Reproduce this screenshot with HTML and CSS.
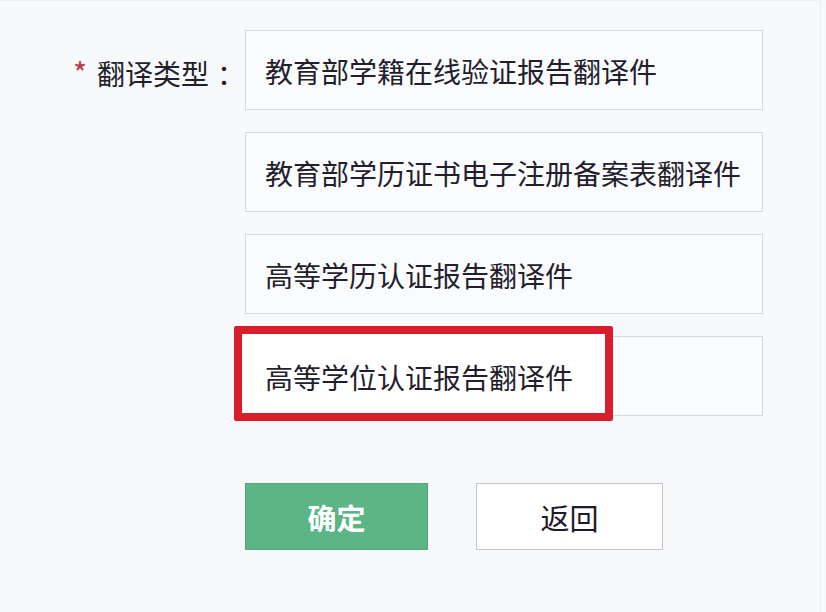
FILE: index.html
```html
<!DOCTYPE html>
<html lang="zh-CN">
<head>
<meta charset="utf-8">
<title>翻译类型</title>
<link rel="stylesheet" href="styles.css">
</head>
<body>
<div class="page">
  <form class="form">
    <div class="row">
      <div class="label"><span class="req">*</span>翻译类型<span class="colon">：</span></div>
      <div class="options">
        <div class="option"><span class="option-text">教育部学籍在线验证报告翻译件</span></div>
        <div class="option"><span class="option-text">教育部学历证书电子注册备案表翻译件</span></div>
        <div class="option"><span class="option-text">高等学历认证报告翻译件</span></div>
        <div class="option option-highlight"><span class="option-text">高等学位认证报告翻译件</span></div>
      </div>
    </div>
    <div class="actions">
      <button type="button" class="btn btn-primary">确定</button>
      <button type="button" class="btn btn-default">返回</button>
    </div>
  </form>
</div>
</body>
</html>
```

FILE: styles.css
```css
html, body {
  margin: 0;
  padding: 0;
  background: #f8f9fb;
}
body {
  font-family: "Noto Sans CJK SC", "Noto Sans", sans-serif;
  color: #231e2c;
}
.page {
  width: 821px;
  height: 612px;
  box-sizing: border-box;
  border-right: 1px solid #eceef2;
  border-top: 1px solid #f0f1f4;
  padding-top: 29px;
}
.row {
  display: flex;
  align-items: flex-start;
}
.label {
  width: 245px;
  height: 80px;
  display: flex;
  align-items: center;
  justify-content: flex-end;
  font-size: 28px;
  padding-top: 5px;
  box-sizing: border-box;
}
.req {
  color: #b23a4c;
  font-size: 30px;
  margin-right: 10px;
  position: relative;
  top: -1px;
}
.colon {
  margin-left: 8px;
}
.options {
  display: flex;
  flex-direction: column;
  gap: 22px;
}
.option {
  width: 518px;
  height: 80px;
  box-sizing: border-box;
  border: 1px solid #d6d9df;
  background: #fafbfd;
  display: flex;
  align-items: center;
  padding-left: 19px;
  padding-top: 2px;
  font-size: 28px;
  position: relative;
}
.option-text {
  position: relative;
  z-index: 1;
  line-height: 1;
}
.option-highlight::before {
  content: "";
  position: absolute;
  left: -12px;
  top: -11px;
  width: 379px;
  height: 95px;
  box-sizing: border-box;
  border: 8px solid #d81e2b;
  background: #ffffff;
  border-radius: 2px;
}
.actions {
  display: flex;
  gap: 48px;
  margin-top: 67px;
  padding-left: 245px;
}
.btn {
  height: 67px;
  font-family: "Noto Sans CJK SC", "Noto Sans", sans-serif;
  font-size: 29px;
  padding: 0;
  cursor: pointer;
  box-sizing: border-box;
}
.btn-primary {
  width: 183px;
  background: #5cb585;
  border: 1px solid #52a879;
  color: #ffffff;
  font-weight: 700;
}
.btn-default {
  width: 187px;
  background: #ffffff;
  border: 1px solid #c3c5ca;
  color: #1e1a26;
}
```
